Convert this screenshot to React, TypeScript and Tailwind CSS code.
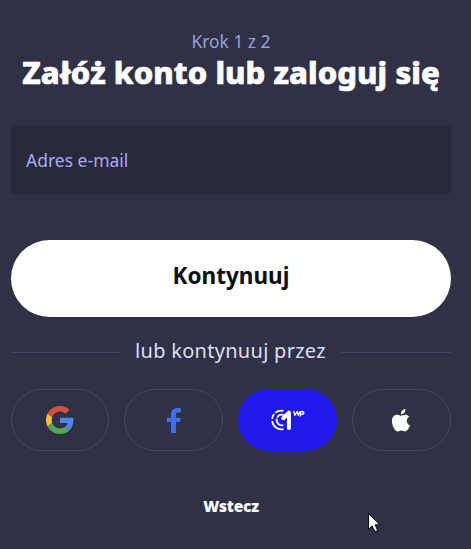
import type { ReactNode } from 'react';

function SocialButton({ label, filled, children }: { label: string; filled?: boolean; children: ReactNode }) {
  return (
    <button
      aria-label={label}
      className={`flex h-[62px] min-w-0 items-center justify-center rounded-full border ${
        filled ? 'border-[#1f19ec] bg-[#1f19ec]' : 'border-[#45466a]'
      }`}
    >
      {children}
    </button>
  );
}

function GoogleIcon() {
  return (
    <svg width="28" height="28" viewBox="0 0 48 48" className="-ml-px">
      <path fill="#d94f3d" d="M24 9.5c3.54 0 6.71 1.22 9.21 3.6l6.85-6.85C35.9 2.38 30.47 0 24 0 14.62 0 6.51 5.38 2.56 13.22l7.98 6.19C12.43 13.72 17.74 9.5 24 9.5z" />
      <path fill="#4d84ee" d="M46.98 24.55c0-1.57-.15-3.09-.38-4.55H24v9.02h12.94c-.58 2.96-2.26 5.48-4.78 7.18l7.73 6c4.51-4.18 7.09-10.36 7.09-17.65z" />
      <path fill="#f4c03c" d="M10.53 28.59c-.48-1.45-.76-2.99-.76-4.59s.27-3.14.76-4.59l-7.98-6.19C.92 16.46 0 20.12 0 24c0 3.88.92 7.54 2.56 10.78l7.97-6.19z" />
      <path fill="#55a656" d="M24 48c6.48 0 11.93-2.13 15.89-5.81l-7.73-6c-2.15 1.45-4.92 2.3-8.16 2.3-6.26 0-11.57-4.22-13.47-9.91l-7.98 6.19C6.51 42.62 14.62 48 24 48z" />
    </svg>
  );
}

function OneLoginIcon() {
  return (
    <svg width="36" height="24" viewBox="0 0 36 24" fill="none" stroke="#fff">
      <path d="M13.4 2.9A9.2 9.2 0 0 0 5.3 4.8M4.1 6A9.2 9.2 0 0 0 2.2 10.8M2.2 13A9.2 9.2 0 0 0 13.4 21.1" strokeWidth="1.8" />
      <path d="M13.6 7A5.3 5.3 0 0 0 7.2 9.6M6.8 10.8A5.3 5.3 0 0 0 13.4 17.1" strokeWidth="1.8" />
      <path d="M13.2 10.2L18.9 4.6V20" strokeWidth="4" strokeLinecap="round" strokeLinejoin="round" />
      <path d="M23.6 2.9L24.9 7.2L27.2 3.5L28.3 7.2L29.8 3.4M30.3 8.5L30.8 3.7C35 2.5 34.6 7.2 30.8 6.2" strokeWidth="1.4" strokeLinejoin="round" />
    </svg>
  );
}

export default function App() {
  return (
    <main className="relative h-[549px] w-[471px] overflow-hidden bg-[#303147] pl-[11px] pr-5 font-['Noto_Sans',sans-serif]">
      <header className="flex flex-col items-center whitespace-nowrap pt-[30px] text-center">
        <p className="text-[17.4px] leading-[22px] text-[#9a9fd8]">Krok 1 z 2</p>
        <h1 className="text-[31px] font-extrabold leading-[40px] tracking-[0.07px] text-white [-webkit-text-stroke:0.7px_white] [stroke-linejoin:round]">
          Załóż konto lub zaloguj się
        </h1>
      </header>

      <input
        type="email"
        placeholder="Adres e-mail"
        className="mt-[33px] block h-[70px] w-full rounded-[5px] bg-[#27283b] px-[15px] text-[17.5px] text-white outline-none placeholder:text-[#a6abf2]"
      />

      <button className="mt-[45px] flex h-[77px] w-full items-center justify-center rounded-full bg-white pb-[5px] text-[22.5px] font-bold text-[#0d0e16]">
        Kontynuuj
      </button>

      <div className="mt-[19px] grid h-[30px] grid-cols-[109px_191px_110px] items-center gap-[15px]">
        <span className="mt-[3px] h-px bg-[#45466a]" />
        <span className="whitespace-nowrap text-center text-[20px] leading-[30px] tracking-[0.28px] text-[#dddff3]">lub kontynuuj przez</span>
        <span className="mt-[3px] h-px bg-[#45466a]" />
      </div>

      <div className="mt-[23px] grid grid-cols-[98px_99px_99px_99px] gap-[15px]">
        <SocialButton label="Google"><GoogleIcon /></SocialButton>
        <SocialButton label="Facebook">
          <svg width="14" height="25" viewBox="0 0 14 25" fill="#3d70e8">
            <path d="M4 25V14H0V9.8H4V6.5C4 2.2 6.7 0 10.4 0C12 0 13.4.1 14 .2V4.3H11.4C9.4 4.3 9 5.2 9 6.8V9.8H13.7L13 14H9V25Z" />
          </svg>
        </SocialButton>
        <SocialButton label="1login od WP" filled><OneLoginIcon /></SocialButton>
        <SocialButton label="Apple">
          <svg width="18" height="23" viewBox="0 0 18 23" fill="#fff" className="-ml-px mt-px">
            <path d="M9 6.7C7.7 6.7 6.5 5.6 4.8 5.7C1.8 5.8 0 8.4 0 12C0 17 3 22.4 5.6 22.4C7 22.4 7.6 21.5 9.3 21.5C11 21.5 11.5 22.4 13 22.4C15.4 22.4 17.2 18.7 18 16.5C13.8 14.7 14 9.5 17.3 7.8C16.2 6.3 14.7 5.7 13.2 5.7C11.4 5.7 10.2 6.7 9 6.7Z" />
            <path d="M13.4 0C13.6 2.9 11.5 5.3 8.9 5.2C8.7 2.6 10.9.2 13.4 0Z" />
          </svg>
        </SocialButton>
      </div>

      <div className="mt-[43px] flex justify-center">
        <button className="text-[15.5px] font-black leading-6 tracking-[-0.2px] text-white">Wstecz</button>
      </div>

      <svg className="pointer-events-none absolute left-[368px] top-[513px]" width="13" height="20" viewBox="0 0 13 20">
        <path d="M.5 .5V16.4L4.2 12.9L6.9 18.7L9.7 17.5L7.1 11.8H12Z" fill="#fff" stroke="#08080e" />
      </svg>
    </main>
  );
}
